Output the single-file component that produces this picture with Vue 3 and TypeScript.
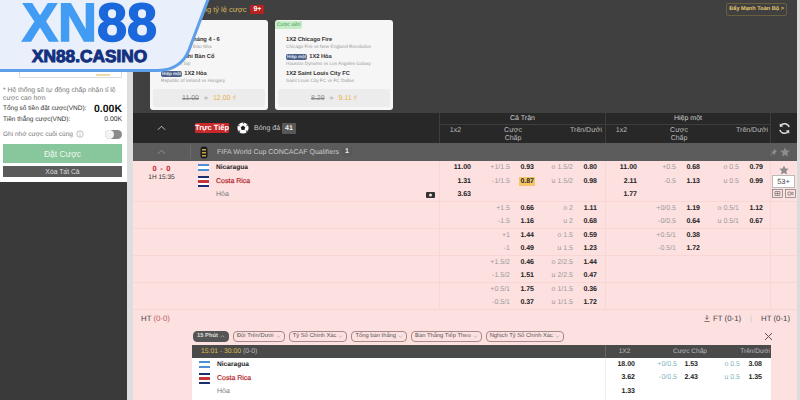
<script setup lang="ts">
type Half = { x?: string; hl?: string; hv?: string; ol?: string; ov?: string; hot?: boolean }
type Line = [Half, Half]

const groups: Line[][] = [
  [
    [{ x: '11.00', hl: '+1/1.5', hv: '0.93', ol: 'o 1.5/2', ov: '0.80' }, { x: '11.00', hl: '+0.5', hv: '0.68', ol: 'o 0.5', ov: '0.79' }],
    [{ x: '1.31', hl: '-1/1.5', hv: '0.87', ol: 'u 1.5/2', ov: '0.98', hot: true }, { x: '2.11', hl: '-0.5', hv: '1.13', ol: 'u 0.5', ov: '0.99' }],
    [{ x: '3.63' }, { x: '1.77' }],
  ],
  [
    [{ hl: '+1.5', hv: '0.66', ol: 'o 2', ov: '1.11' }, { hl: '+0/0.5', hv: '1.19', ol: 'o 0.5/1', ov: '1.12' }],
    [{ hl: '-1.5', hv: '1.16', ol: 'u 2', ov: '0.68' }, { hl: '-0/0.5', hv: '0.64', ol: 'u 0.5/1', ov: '0.67' }],
  ],
  [
    [{ hl: '+1', hv: '1.44', ol: 'o 1.5', ov: '0.59' }, { hl: '+0.5/1', hv: '0.38' }],
    [{ hl: '-1', hv: '0.49', ol: 'u 1.5', ov: '1.23' }, { hl: '-0.5/1', hv: '1.72' }],
  ],
  [
    [{ hl: '+1.5/2', hv: '0.46', ol: 'o 2/2.5', ov: '1.44' }, {}],
    [{ hl: '-1.5/2', hv: '1.51', ol: 'u 2/2.5', ov: '0.47' }, {}],
  ],
  [
    [{ hl: '+0.5/1', hv: '1.75', ol: 'o 1/1.5', ov: '0.36' }, {}],
    [{ hl: '-0.5/1', hv: '0.37', ol: 'u 1/1.5', ov: '1.72' }, {}],
  ],
]

const pills = ['Đội Trên/Dưới', 'Tỷ Số Chính Xác', 'Tổng bàn thắng', 'Bàn Thắng Tiếp Theo', 'Nghịch Tỷ Số Chính Xác']

const subRows: Half[] = [
  { x: '18.00', hl: '+0/0.5', hv: '1.53', ol: 'o 0.5', ov: '3.08' },
  { x: '3.62', hl: '-0/0.5', hv: '2.43', ol: 'u 0.5', ov: '1.35' },
  { x: '1.33' },
]

const cards = [
  {
    tag: '',
    legs: [
      { t: '1X2 Tỷ Số Tháng 4 - 6', s: 'Slovakia vs Bồ Đào Nha', pill: false },
      { t: '1X2 Đội Ghi Bàn Cổ', s: 'Croatia vs Síp', pill: false },
      { t: '1X2 Hòa', s: 'Republic of Ireland vs Hungary', pill: true },
    ],
    from: '11.00',
    to: '12.00',
  },
  {
    tag: 'Cược xiên',
    legs: [
      { t: '1X2 Chicago Fire', s: 'Chicago Fire vs New England Revolution', pill: false },
      { t: '1X2 Hòa', s: 'Houston Dynamo vs Los Angeles Galaxy', pill: true },
      { t: '1X2 Saint Louis City FC', s: 'Saint Louis City FC vs FC Dallas', pill: false },
    ],
    from: '8.29',
    to: '9.11',
  },
]
</script>

<template>
  <div class="page">
    <aside class="side">
      <div class="slip"><span class="slip-mark"></span></div>
      <div class="slip-body">
        <p class="note">* Hệ thống sẽ tự động chấp nhận tỉ lệ cược cao hơn</p>
        <div class="sum strong"><span>Tổng số tiền đặt cược(VND):</span><b>0.00K</b></div>
        <div class="sum"><span>Tiền thắng cược(VND):</span><em>0.00K</em></div>
        <div class="remember">
          <span>Ghi nhớ cược cuối cùng</span>
          <svg class="info" viewBox="0 0 10 10"><circle cx="5" cy="5" r="4" /><path d="M5 4.4v2.8M5 2.6v.9" /></svg>
          <span class="toggle"><i></i></span>
        </div>
        <button class="place">Đặt Cược</button>
        <button class="clear">Xóa Tất Cả</button>
      </div>
    </aside>

    <div class="gutter"></div>

    <main class="main">
      <section class="promo">
        <div class="promo-head">
          <span class="promo-title">Tăng tỷ lệ cược</span>
          <span class="promo-count">9+</span>
          <span class="boost">Đẩy Mạnh Toàn Bộ &gt;</span>
        </div>
        <div class="cards">
          <article v-for="c in cards" :key="c.from" class="card">
            <span v-if="c.tag" class="card-tag">{{ c.tag }}</span>
            <div class="legs">
              <div v-for="l in c.legs" :key="l.s" class="leg">
                <div class="leg-title"><span v-if="l.pill" class="leg-pill">Hiệp một</span>{{ l.t }}</div>
                <div class="leg-sub">{{ l.s }}</div>
              </div>
            </div>
            <div class="card-foot">
              <s>{{ c.from }}</s><span class="arrow">»</span><span class="gold">{{ c.to }} ₫</span>
            </div>
          </article>
        </div>
      </section>

      <section class="thead">
        <div class="thead-left">
          <div class="chev-col">
            <svg class="chev" viewBox="0 0 10 6"><path d="M1 5l4-4 4 4" /></svg>
          </div>
          <div class="live-wrap">
            <span class="live">Trực Tiếp</span>
            <svg class="ball" viewBox="0 0 12 12">
              <circle cx="6" cy="6" r="5.6" fill="#fff" />
              <path d="M6 3.6l2.3 1.7-.9 2.7H4.600l-.9-2.700zM6 .5v1.500l1.500-1zM1 3.500l1.300 1 .2-2zM11 3.500l-1.300 1-.2-2zM2.500 10l1-1.300-2-.3zM9.500 10l-1-1.300 2-.3z" fill="#222" />
            </svg>
            <span class="sport">Bóng đá</span>
            <span class="count">41</span>
          </div>
        </div>
        <div class="market-head">
          <div class="mh-title">Cả Trận</div>
          <div class="mh-cols">
            <span class="mh-x">1x2</span><span class="mh-h">Cược<br />Chấp</span><span class="mh-o">Trên/Dưới</span>
          </div>
        </div>
        <div class="market-head second">
          <div class="mh-title">Hiệp một</div>
          <div class="mh-cols">
            <span class="mh-x">1x2</span><span class="mh-h">Cược<br />Chấp</span><span class="mh-o">Trên/Dưới</span>
          </div>
        </div>
        <div class="refresh">
          <svg viewBox="0 0 14 14"><path d="M12 5.500A5.200 5.200 0 0 0 2.800 4M2 8.500A5.200 5.200 0 0 0 11.200 10" /><path class="solid" d="M1.800 1.500l.2 4 3.800-.8zM12.200 12.500l-.2-4-3.800.8z" /></svg>
        </div>
      </section>

      <section class="league">
        <div class="chev-col">
          <svg class="chev dim" viewBox="0 0 10 6"><path d="M1 5l4-4 4 4" /></svg>
        </div>
        <div class="league-name">
          <svg class="trophy" viewBox="0 0 8 13">
            <rect x="0.500" y="0.500" width="7" height="12" rx="3" fill="#1c1c1c" />
            <rect x="2" y="3" width="4" height="1.500" fill="#c9a33e" />
            <rect x="2" y="6" width="4" height="1.500" fill="#c9a33e" />
            <rect x="2" y="9" width="4" height="1.500" fill="#c9a33e" />
          </svg>
          <span>FIFA World Cup CONCACAF Qualifiers</span>
          <span class="count small">1</span>
        </div>
        <div class="league-tools">
          <svg class="pin" viewBox="0 0 8 8"><path d="M5 0l3 3-1 .5-1.500 1.500V7L3.500 5 1 7.500.5 7 3 4.500 1 3h2L4.500 1.500z" /></svg>
          <svg class="star" viewBox="0 0 12 12"><path d="M6 .5l1.700 3.700 4 .4-3 2.700.9 4L6 9.200 2.400 11.300l.9-4-3-2.700 4-.4z" /></svg>
        </div>
      </section>

      <section class="odds">
        <div v-for="(g, gi) in groups" :key="gi" class="group">
          <div class="time">
            <template v-if="gi === 0">
              <div class="score">0 - 0</div>
              <div class="clock">1H 15:35</div>
            </template>
          </div>
          <div class="teams">
            <template v-if="gi === 0">
              <div class="team">
                <span class="flag ni"></span><b>Nicaragua</b>
              </div>
              <div class="team">
                <span class="flag cr"></span><b class="red">Costa Rica</b>
              </div>
              <div class="team draw">
                <span class="flag none"></span><span>Hòa</span>
                <svg class="tv" viewBox="0 0 9 6"><rect width="9" height="6" rx="1" /><circle cx="4.500" cy="3" r="1.500" fill="#fde0e0" /></svg>
              </div>
            </template>
          </div>
          <div v-for="h in [0, 1]" :key="h" class="half">
            <div v-for="(l, li) in g" :key="li" class="line">
              <span class="x">{{ l[h].x }}</span>
              <span class="lab">{{ l[h].hl }}</span>
              <span class="val"><i :class="{ hot: l[h].hot }">{{ l[h].hv }}</i></span>
              <span class="lab">{{ l[h].ol }}</span>
              <span class="val"><i>{{ l[h].ov }}</i></span>
            </div>
          </div>
          <div class="extra">
            <template v-if="gi === 0">
              <svg class="star" viewBox="0 0 12 12"><path d="M6 .5l1.700 3.700 4 .4-3 2.700.9 4L6 9.200 2.400 11.300l.9-4-3-2.700 4-.4z" /></svg>
              <span class="more">53+</span>
              <div class="mini">
                <svg viewBox="0 0 11 9"><rect x=".5" y=".5" width="10" height="8" /><path d="M3 2.500h5v4H3zM5.500 2.500v4M3 4.500h5" /></svg>
                <svg viewBox="0 0 11 9"><rect x=".5" y=".5" width="10" height="8" /><path d="M3 3h3v3H3zM6 4.500l2-1.500v3z" /></svg>
              </div>
            </template>
          </div>
        </div>
      </section>

      <section class="detail">
        <div class="ht-row">
          <div class="ht"><span>HT</span> <span class="ht-score">(0-0)</span></div>
          <div class="ft">
            <svg viewBox="0 0 7 8"><path d="M3.500 0v5M1.500 3l2 2 2-2M.5 7.500h6" /></svg>
            <span>FT (0-1)</span><span class="pipe">|</span><span>HT (0-1)</span>
          </div>
        </div>
        <div class="pills">
          <span class="pill on">15 Phút <svg viewBox="0 0 8 5"><path d="M1 4l3-3 3 3" /></svg></span>
          <span v-for="p in pills" :key="p" class="pill">{{ p }} <svg viewBox="0 0 8 5"><path d="M1 1l3 3 3-3" /></svg></span>
          <svg class="close" viewBox="0 0 9 9"><path d="M1 1l7 7M8 1L1 8" /></svg>
        </div>
        <div class="sub">
          <div class="sub-head">
            <div class="period"><span class="gold2">15:01 - 30:00</span> (0-0)</div>
            <div class="sub-cols"><span class="c1">1X2</span><span class="c2">Cược Chấp</span><span class="c3">Trên/Dưới</span></div>
          </div>
          <div class="sub-body">
            <div class="sub-teams">
              <div class="team"><span class="flag ni"></span><b>Nicaragua</b></div>
              <div class="team"><span class="flag cr"></span><b class="red">Costa Rica</b></div>
              <div class="team draw"><span class="flag none"></span><span>Hòa</span></div>
            </div>
            <div class="sub-odds">
              <div v-for="r in subRows" :key="r.x" class="sub-line">
                <span class="x">{{ r.x }}</span>
                <span class="lab teal">{{ r.hl }}</span>
                <span class="val"><i>{{ r.hv }}</i></span>
                <span class="lab teal">{{ r.ol }}</span>
                <span class="val"><i>{{ r.ov }}</i></span>
              </div>
            </div>
          </div>
        </div>
      </section>
    </main>

    <div class="edge"></div>

    <div class="logo">
      <svg class="logo-bg" viewBox="0 0 215 76">
        <path d="M-3 -3H209L189 50Q181 70 158 70.500H-3Z" fill="#e9effb" stroke="#5f9fe8" stroke-width="3" />
      </svg>
      <div class="logo-main"><span class="xn">XN</span><span class="ee">88</span></div>
      <div class="logo-sub">XN88.CASINO</div>
    </div>
  </div>
</template>

<style scoped>
.page {
  position: relative;
  display: flex;
  width: 800px;
  height: 400px;
  overflow: hidden;
  font-family: "Liberation Sans", Arial, sans-serif;
  font-size: 7px;
  color: #222;
  background: #e2e2e2;
  text-rendering: geometricPrecision;
}
.side { width: 127px; flex: none; background: #3a3a3a; height: 400px; }
.gutter { width: 6px; flex: none; background: #dedede; }
.edge { width: 3px; flex: none; background: #dcdcdc; }
.main { width: 664px; flex: none; background: #fde0e0; }

.slip { height: 78px; background: #fff; position: relative; }
.slip::after {
  content: "";
  position: absolute;
  left: 19px;
  right: 5px;
  bottom: 0;
  height: 12px;
  border: 1px solid #ddd;
  border-top: 0;
}
.slip-mark { position: absolute; left: 96px; bottom: 2px; width: 14px; height: 2px; background: #f1d9a8; }
.slip-body { background: #fff; height: 104px; padding: 9px 5px 0 3px; box-sizing: border-box; }
.note { margin: 0; font-size: 6.800px; line-height: 8px; color: #777; }
.sum { display: flex; justify-content: space-between; align-items: center; color: #333; font-size: 6.500px; height: 11px; white-space: nowrap; }
.sum.strong b { font-size: 10.500px; color: #111; }
.sum em { font-style: normal; font-size: 6.800px; }
.remember { display: flex; align-items: center; gap: 3px; height: 14px; margin-top: 2px; color: #777; font-size: 6.500px; white-space: nowrap; }
.info { width: 8px; height: 8px; fill: none; stroke: #999; stroke-width: .8; }
.toggle {
  margin-left: auto;
  width: 17px;
  height: 9px;
  background: #8a8a8a;
  border-radius: 5px;
  position: relative;
}
.toggle i { position: absolute; left: 0; top: 0; width: 9px; height: 9px; border-radius: 50%; background: #f3f3f3; }
.place, .clear {
  display: block;
  width: 119px;
  border: 0;
  padding: 0;
  font-family: inherit;
  color: #eef6ef;
}
.place { height: 19px; margin-top: 3px; background: #87c79b; font-size: 8.500px; }
.clear { height: 11px; margin-top: 3px; background: #5a5a5a; font-size: 6.800px; color: #ddd; }

.promo { height: 113px; background: #404040; box-sizing: border-box; padding: 3px 10px 0 17px; }
.promo-head { display: flex; align-items: center; height: 12px; padding-left: 44px; }
.promo-title { color: #d4b45c; font-size: 7.500px; }
.promo-count { margin-left: 4px; background: #b5221f; color: #fff; font-weight: 700; font-size: 7px; padding: 0 3px; height: 9px; line-height: 9px; border-radius: 1px; }
.boost {
  margin-left: auto;
  color: #e2c66d;
  font-size: 5.600px;
  font-weight: 700;
  border: 1px solid #6a5f3c;
  border-radius: 2px;
  padding: 0 2px;
  height: 11px;
  line-height: 11px;
}
.cards { display: flex; gap: 7px; margin-top: 5px; }
.card {
  position: relative;
  width: 118px;
  height: 90px;
  background: #f6f6f6;
  border-radius: 3px;
  box-sizing: border-box;
  padding: 16.500px 3px 3px;
  display: flex;
  flex-direction: column;
}
.card-tag {
  position: absolute;
  left: 0;
  top: 1px;
  background: #c5ecc6;
  color: #3d9a4e;
  font-size: 5px;
  padding: 0 2px;
  height: 8px;
  line-height: 8px;
  border-radius: 2px 0 2px 0;
}
.legs { padding-left: 8px; flex: 1; min-height: 0; }
.leg { height: 17px; }
.leg-title { font-size: 5.700px; font-weight: 700; color: #333; line-height: 7px; white-space: nowrap; }
.leg-sub { font-size: 4.700px; color: #999; line-height: 6px; white-space: nowrap; }
.leg-pill { display: inline-block; background: #4d5f86; color: #dfe6f5; border-radius: 2px; font-size: 4.500px; padding: 0 1px; line-height: 6px; margin-right: 2px; }
.card-foot {
  height: 18px;
  flex: none;
  background: #ececec;
  border-radius: 2px;
  display: flex;
  align-items: center;
  justify-content: center;
  gap: 5px;
  font-size: 7px;
  color: #888;
}
.gold { color: #e6b24a; font-weight: 400; }
.arrow { color: #999; }

.thead { display: grid; grid-template-columns: 306px 166px 165px 27px; height: 30px; background: #282828; color: #bbb; }
.thead-left { display: flex; align-items: center; }
.chev-col { width: 57px; flex: none; display: flex; justify-content: center; }
.chev { width: 9px; height: 6px; fill: none; stroke: #ccc; stroke-width: 1; }
.chev.dim { stroke: #999; }
.live-wrap { display: flex; align-items: center; padding-left: 5px; }
.live { background: #c8282a; color: #fff; font-weight: 700; font-size: 7.500px; height: 10px; line-height: 10px; width: 34px; text-align: center; border-radius: 1px; white-space: nowrap; }
.ball { width: 12px; height: 12px; margin-left: 8px; }
.sport { margin-left: 5px; font-size: 7px; color: #ccc; }
.count { margin-left: 2px; background: #585858; color: #eee; font-weight: 700; font-size: 7px; padding: 0 3px; height: 11px; line-height: 11px; border-radius: 1px; }
.count.small { height: 10px; line-height: 10px; margin-left: 3px; }
.market-head { border-left: 1px solid #3d3d3d; display: flex; flex-direction: column; }
.mh-title { height: 11px; line-height: 12px; text-align: center; border-bottom: 1px solid #3d3d3d; font-size: 7px; color: #ccc; }
.mh-cols { position: relative; display: grid; grid-template-columns: 31px 61px 1fr; padding-top: 2px; line-height: 8px; font-size: 7px; text-align: center; }
.mh-h { padding-left: 23px; }
.mh-o { text-align: right; padding-right: 3px; }
.second .mh-o { padding-right: 2px; }
.refresh { border-left: 1px solid #3d3d3d; display: flex; align-items: center; justify-content: center; }
.refresh svg { width: 13px; height: 13px; fill: none; stroke: #ddd; stroke-width: 1.500; }
.refresh .solid { fill: #ddd; stroke: none; }

.league { display: flex; align-items: center; height: 18px; background: #5c5c5c; color: #c8c8c8; }
.league-name { display: flex; align-items: center; border-left: 1px solid #6b6b6b; height: 14px; padding-left: 9px; font-size: 7px; }
.trophy { width: 8px; height: 13px; margin-right: 9px; flex: none; }
.league-tools { margin-left: auto; width: 27px; display: flex; align-items: center; gap: 3px; padding-right: 2px; box-sizing: border-box; }
.pin { width: 7px; height: 7px; fill: #8d8d8d; }
.star { width: 10px; height: 10px; fill: #8d8d8d; }

.group { display: grid; grid-template-columns: 57px 249px 166px 165px 27px; box-shadow: inset 0 -1px 0 #f9d5d5; }
.time { text-align: center; }
.score { color: #c0272d; font-weight: 700; font-size: 7.500px; line-height: 9px; margin-top: 3px; word-spacing: 1.500px; }
.clock { font-size: 6.500px; line-height: 9px; color: #333; }
.team { display: flex; align-items: center; height: 13.500px; font-size: 7px; gap: 7px; }
.team b { font-weight: 700; color: #222; font-size: 6.600px; }
.team b.red { color: #b3272d; font-weight: 400; font-size: 7px; -webkit-text-stroke: .2px #b3272d; }
.teams { padding-left: 8px; }
.draw { color: #777; }
.flag { width: 11px; height: 9px; display: block; flex: none; }
.flag.ni { height: 7px; background: linear-gradient(#4d8fd6 0 33%, #fff 33% 66%, #4d8fd6 66%); }
.flag.cr { height: 11px; background: linear-gradient(#1e2d70 0 17%, #fff 17% 33%, #c8353b 33% 67%, #fff 67% 83%, #1e2d70 83%); }
.flag.none { visibility: hidden; }
.tv { width: 9px; height: 6px; fill: #333; margin-left: auto; margin-right: 4px; }

.half { border-left: 1px solid #f9d5d5; }
.line { display: grid; grid-template-columns: 31px 39px 24px 39px 24px; height: 13.500px; line-height: 13.500px; text-align: right; }
.x, .val i { font-weight: 700; font-style: normal; color: #222; }
.lab { color: #9a9a9a; }
.val i.hot { background: #f6c666; padding: 1px 1px; margin-right: -1px; }
.extra { border-left: 1px solid #f9d5d5; display: flex; flex-direction: column; align-items: center; padding-top: 4px; }
.more { display: block; height: 11px; line-height: 11px; border: 1px solid #bbb; background: #fff; text-align: center; font-size: 7.500px; color: #444; margin-left: -1px; width: 21px; }
.mini { display: flex; gap: 2px; margin-top: 1px; margin-left: -1px; }
.mini svg { width: 11px; height: 9px; fill: none; stroke: #777; stroke-width: .7; }

.detail { background: #fde0e0; }
.ht-row { display: flex; justify-content: space-between; align-items: center; height: 18px; padding: 0 7px 0 8px; font-size: 7.800px; color: #444; }
.ht-score { color: #b66; }
.ft { display: flex; align-items: center; gap: 3px; font-size: 7.800px; }
.ft svg { width: 6px; height: 7px; fill: none; stroke: #444; stroke-width: .8; }
.pipe { color: #ccc; margin: 0 6px; }
.pills { position: relative; display: flex; align-items: center; gap: 4px; margin-left: 60px; margin-top: 2px; height: 13px; }
.pill {
  display: flex;
  align-items: center;
  gap: 2px;
  height: 11px;
  box-sizing: border-box;
  border: 1px solid #a58a8a;
  border-radius: 4px;
  padding: 0 3px;
  font-size: 5.800px;
  color: #555;
  white-space: nowrap;
}
.pill svg { width: 5px; height: 3px; fill: none; stroke: #999; stroke-width: .8; }
.pill.on { background: #555; color: #ddd; border-color: #555; font-weight: 700; }
.pill.on svg { stroke: #ddd; }
.close { position: absolute; left: 571px; top: 2px; width: 9px; height: 9px; fill: none; stroke: #555; stroke-width: 1; }
.sub { margin-left: 59px; width: 579px; margin-top: 2.500px; }
.sub-head { display: flex; height: 13px; background: #4a4a4a; align-items: center; color: #bbb; }
.period { width: 413px; padding-left: 9px; box-sizing: border-box; font-size: 6.800px; }
.gold2 { color: #d9bb4d; }
.sub-cols { flex: 1; display: flex; height: 13px; align-items: center; border-left: 1px solid #666; position: relative; font-size: 6.500px; }
.c1 { width: 37px; text-align: center; }
.c2 { width: 66px; padding-left: 30px; box-sizing: border-box; white-space: nowrap; }
.c3 { margin-left: auto; padding-right: 1px; }
.sub-body { display: flex; background: #fff; height: 42px; }
.sub-teams { width: 413px; padding-left: 7px; box-sizing: border-box; }
.sub-odds { flex: 1; border-left: 1px solid #eee; }
.sub-line { display: grid; grid-template-columns: 29px 42px 21px 42px 22px; height: 13.300px; line-height: 13.300px; text-align: right; }
.teal { color: #7fb4bc; }

.logo { position: absolute; left: 0; top: 0; width: 215px; height: 76px; }
.logo-bg { position: absolute; inset: 0; width: 215px; height: 76px; display: block; }
.logo-main {
  position: absolute;
  left: 22px;
  top: 0;
  font-size: 54px;
  line-height: 46px;
  font-weight: 700;
  white-space: nowrap;
  -webkit-text-stroke: 1.500px currentColor;
}
.xn { color: #429cf3; }
.ee { color: #1a68dc; }
.logo-sub {
  position: absolute;
  left: 32px;
  top: 47px;
  font-size: 17.300px;
  line-height: 18px;
  font-weight: 700;
  color: #14307f;
  white-space: nowrap;
  -webkit-text-stroke: 1px currentColor;
}
</style>
